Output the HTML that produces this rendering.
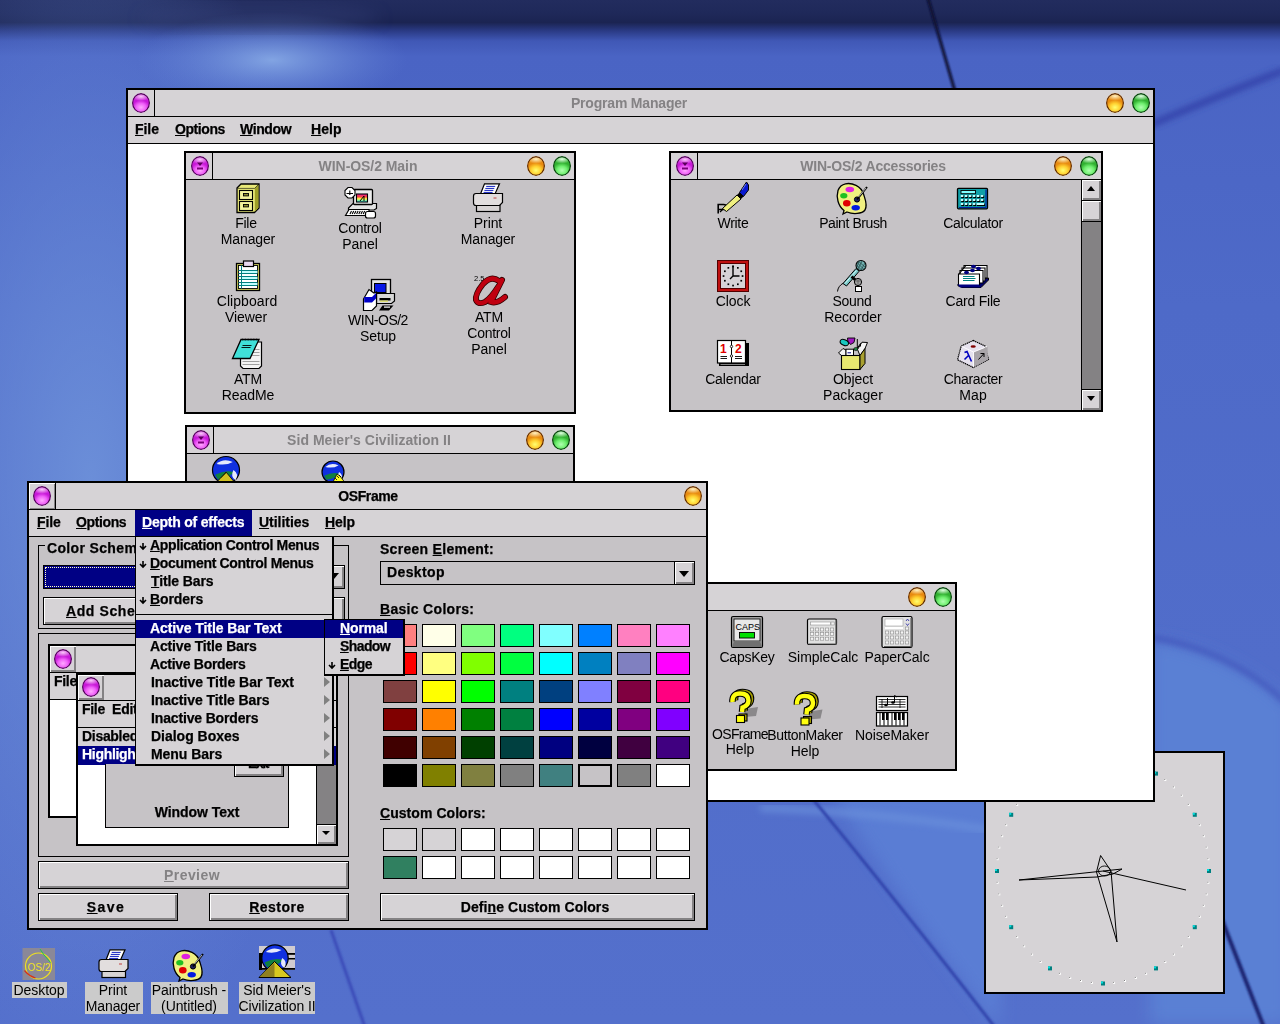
<!DOCTYPE html><html><head><meta charset="utf-8"><style>
*{margin:0;padding:0;box-sizing:border-box}
html,body{width:1280px;height:1024px;overflow:hidden;background:#4f68c8;font-family:'Liberation Sans', sans-serif}
div,svg{position:absolute}
.abs{position:absolute}
.t{-webkit-font-smoothing:antialiased;will-change:transform;position:absolute;white-space:nowrap;line-height:15px;font-size:13px;font-family:'Liberation Sans', sans-serif}
.ball{border-radius:50%}
.purple{background:radial-gradient(ellipse 60% 45% at 50% 72%, #ffa8ff 0%, #f060f8 45%, rgba(230,40,240,0) 80%), radial-gradient(ellipse 50% 22% at 50% 18%, #f8c8f8 0%, rgba(240,160,240,0) 100%), #c818d8;box-shadow:inset 0 0 0 1.2px #4a0a50}
.orange{background:radial-gradient(ellipse 60% 45% at 50% 72%, #ffff70 0%, #ffd030 45%, rgba(240,150,0,0) 85%), radial-gradient(ellipse 50% 22% at 50% 16%, #fff0c0 0%, rgba(255,220,150,0) 100%), #e88a10;box-shadow:inset 0 0 0 1.2px #5a2a08}
.green{background:radial-gradient(ellipse 60% 45% at 50% 72%, #b0ffb0 0%, #70f070 45%, rgba(60,200,60,0) 85%), radial-gradient(ellipse 50% 22% at 50% 16%, #e0ffe0 0%, rgba(200,255,200,0) 100%), #30b030;box-shadow:inset 0 0 0 1.2px #0a3a10}
.btn{background:#d6d3d6;border:1px solid #000;box-shadow:inset 2px 2px 0 #fff, inset -2px -2px 0 #848284}
</style></head><body><svg style="left:0;top:0" width="1280" height="1024" viewBox="0 0 1280 1024">
<defs>
<linearGradient id="bgv" x1="0" y1="0" x2="0" y2="1" >
<stop offset="0" stop-color="#222c5e"/><stop offset="0.012" stop-color="#1f295a"/>
<stop offset="0.022" stop-color="#1b2452"/><stop offset="0.03" stop-color="#2a3a84"/>
<stop offset="0.04" stop-color="#4058b6"/><stop offset="0.055" stop-color="#4a64c4"/>
<stop offset="0.3" stop-color="#4e6ac8"/><stop offset="1" stop-color="#5470cc"/>
</linearGradient>
<radialGradient id="blob" cx="0.5" cy="0.5" r="0.5">
<stop offset="0" stop-color="#90b4ea" stop-opacity="0.8"/><stop offset="1" stop-color="#6a8ad8" stop-opacity="0"/>
</radialGradient>
<radialGradient id="lglow" cx="0.5" cy="0.5" r="0.5">
<stop offset="0" stop-color="#6e92da" stop-opacity="0.9"/><stop offset="1" stop-color="#6a8ad8" stop-opacity="0"/>
</radialGradient>
<filter id="bl3"><feGaussianBlur stdDeviation="3"/></filter>
<filter id="bl1"><feGaussianBlur stdDeviation="1.2"/></filter>
<filter id="bl8"><feGaussianBlur stdDeviation="8"/></filter>
</defs>
<rect width="1280" height="1024" fill="url(#bgv)"/>
<ellipse cx="90" cy="480" rx="250" ry="600" fill="url(#lglow)"/>
<ellipse cx="272" cy="60" rx="135" ry="48" fill="url(#blob)"/>
<ellipse cx="260" cy="18" rx="120" ry="14" fill="#3a4680" opacity="0.35" filter="url(#bl8)"/>
<path d="M927 -5 L956 95" stroke="#0a1030" stroke-width="3" filter="url(#bl1)"/>
<path d="M1150 125 Q1220 95 1285 70" stroke="#3040a8" stroke-width="6" fill="none" filter="url(#bl3)"/>
<path d="M1150 640 Q1230 650 1290 705 L1290 1024 L1150 1024 Z" fill="#5a80d4" filter="url(#bl8)"/>
<path d="M1150 637 Q1230 650 1285 702" stroke="#3e50b8" stroke-width="4" fill="none" filter="url(#bl3)"/>
<path d="M830 790 L1000 790 L1000 1030 L1000 1030 Q900 900 830 790Z" fill="#5b80d6" opacity="0.85" filter="url(#bl8)"/>
<path d="M760 808 Q880 812 990 830" stroke="#6a90dc" stroke-width="8" fill="none" opacity="0.7" filter="url(#bl3)"/>
<path d="M812 798 Q900 905 997 1030" stroke="#3244ac" stroke-width="3" fill="none" filter="url(#bl1)"/>

<path d="M331 930 L366 1030" stroke="#3a4cb8" stroke-width="3" fill="none" filter="url(#bl1)"/>
<path d="M1222 920 L1265 1030" stroke="#1a2470" stroke-width="4" fill="none" filter="url(#bl1)"/>
</svg>
<div class="" style="left:984px;top:751px;width:241px;height:243px;background:#000"></div>
<div class="" style="left:986px;top:753px;width:237px;height:239px;background:#d6d3d6"></div>
<svg style="left:0;top:0" width="1280" height="1024"><rect x="1101.0" y="756.5" width="4" height="4" fill="#008080"/><rect x="1101.0" y="756.5" width="2" height="2" fill="#00e0e0"/><rect x="1113.1" y="758.1" width="2" height="2" fill="#fff"/><rect x="1113.1" y="758.1" width="1" height="1" fill="#808080"/><rect x="1124.0" y="760.0" width="2" height="2" fill="#fff"/><rect x="1124.0" y="760.0" width="1" height="1" fill="#808080"/><rect x="1134.8" y="763.0" width="2" height="2" fill="#fff"/><rect x="1134.8" y="763.0" width="1" height="1" fill="#808080"/><rect x="1145.1" y="767.2" width="2" height="2" fill="#fff"/><rect x="1145.1" y="767.2" width="1" height="1" fill="#808080"/><rect x="1154.0" y="771.6" width="4" height="4" fill="#008080"/><rect x="1154.0" y="771.6" width="2" height="2" fill="#00e0e0"/><rect x="1164.3" y="779.0" width="2" height="2" fill="#fff"/><rect x="1164.3" y="779.0" width="1" height="1" fill="#808080"/><rect x="1172.9" y="786.4" width="2" height="2" fill="#fff"/><rect x="1172.9" y="786.4" width="1" height="1" fill="#808080"/><rect x="1180.8" y="794.7" width="2" height="2" fill="#fff"/><rect x="1180.8" y="794.7" width="1" height="1" fill="#808080"/><rect x="1187.8" y="803.9" width="2" height="2" fill="#fff"/><rect x="1187.8" y="803.9" width="1" height="1" fill="#808080"/><rect x="1192.8" y="812.8" width="4" height="4" fill="#008080"/><rect x="1192.8" y="812.8" width="2" height="2" fill="#00e0e0"/><rect x="1198.8" y="824.2" width="2" height="2" fill="#fff"/><rect x="1198.8" y="824.2" width="1" height="1" fill="#808080"/><rect x="1202.8" y="835.2" width="2" height="2" fill="#fff"/><rect x="1202.8" y="835.2" width="1" height="1" fill="#808080"/><rect x="1205.7" y="846.6" width="2" height="2" fill="#fff"/><rect x="1205.7" y="846.6" width="1" height="1" fill="#808080"/><rect x="1207.4" y="858.2" width="2" height="2" fill="#fff"/><rect x="1207.4" y="858.2" width="1" height="1" fill="#808080"/><rect x="1207.0" y="869.0" width="4" height="4" fill="#008080"/><rect x="1207.0" y="869.0" width="2" height="2" fill="#00e0e0"/><rect x="1207.4" y="881.8" width="2" height="2" fill="#fff"/><rect x="1207.4" y="881.8" width="1" height="1" fill="#808080"/><rect x="1205.7" y="893.4" width="2" height="2" fill="#fff"/><rect x="1205.7" y="893.4" width="1" height="1" fill="#808080"/><rect x="1202.8" y="904.8" width="2" height="2" fill="#fff"/><rect x="1202.8" y="904.8" width="1" height="1" fill="#808080"/><rect x="1198.8" y="915.8" width="2" height="2" fill="#fff"/><rect x="1198.8" y="915.8" width="1" height="1" fill="#808080"/><rect x="1192.8" y="925.2" width="4" height="4" fill="#008080"/><rect x="1192.8" y="925.2" width="2" height="2" fill="#00e0e0"/><rect x="1187.8" y="936.1" width="2" height="2" fill="#fff"/><rect x="1187.8" y="936.1" width="1" height="1" fill="#808080"/><rect x="1180.8" y="945.3" width="2" height="2" fill="#fff"/><rect x="1180.8" y="945.3" width="1" height="1" fill="#808080"/><rect x="1172.9" y="953.6" width="2" height="2" fill="#fff"/><rect x="1172.9" y="953.6" width="1" height="1" fill="#808080"/><rect x="1164.3" y="961.0" width="2" height="2" fill="#fff"/><rect x="1164.3" y="961.0" width="1" height="1" fill="#808080"/><rect x="1154.0" y="966.4" width="4" height="4" fill="#008080"/><rect x="1154.0" y="966.4" width="2" height="2" fill="#00e0e0"/><rect x="1145.1" y="972.8" width="2" height="2" fill="#fff"/><rect x="1145.1" y="972.8" width="1" height="1" fill="#808080"/><rect x="1134.8" y="977.0" width="2" height="2" fill="#fff"/><rect x="1134.8" y="977.0" width="1" height="1" fill="#808080"/><rect x="1124.0" y="980.0" width="2" height="2" fill="#fff"/><rect x="1124.0" y="980.0" width="1" height="1" fill="#808080"/><rect x="1113.1" y="981.9" width="2" height="2" fill="#fff"/><rect x="1113.1" y="981.9" width="1" height="1" fill="#808080"/><rect x="1101.0" y="981.5" width="4" height="4" fill="#008080"/><rect x="1101.0" y="981.5" width="2" height="2" fill="#00e0e0"/><rect x="1090.9" y="981.9" width="2" height="2" fill="#fff"/><rect x="1090.9" y="981.9" width="1" height="1" fill="#808080"/><rect x="1080.0" y="980.0" width="2" height="2" fill="#fff"/><rect x="1080.0" y="980.0" width="1" height="1" fill="#808080"/><rect x="1069.2" y="977.0" width="2" height="2" fill="#fff"/><rect x="1069.2" y="977.0" width="1" height="1" fill="#808080"/><rect x="1058.9" y="972.8" width="2" height="2" fill="#fff"/><rect x="1058.9" y="972.8" width="1" height="1" fill="#808080"/><rect x="1048.0" y="966.4" width="4" height="4" fill="#008080"/><rect x="1048.0" y="966.4" width="2" height="2" fill="#00e0e0"/><rect x="1039.7" y="961.0" width="2" height="2" fill="#fff"/><rect x="1039.7" y="961.0" width="1" height="1" fill="#808080"/><rect x="1031.1" y="953.6" width="2" height="2" fill="#fff"/><rect x="1031.1" y="953.6" width="1" height="1" fill="#808080"/><rect x="1023.2" y="945.3" width="2" height="2" fill="#fff"/><rect x="1023.2" y="945.3" width="1" height="1" fill="#808080"/><rect x="1016.2" y="936.1" width="2" height="2" fill="#fff"/><rect x="1016.2" y="936.1" width="1" height="1" fill="#808080"/><rect x="1009.2" y="925.2" width="4" height="4" fill="#008080"/><rect x="1009.2" y="925.2" width="2" height="2" fill="#00e0e0"/><rect x="1005.2" y="915.8" width="2" height="2" fill="#fff"/><rect x="1005.2" y="915.8" width="1" height="1" fill="#808080"/><rect x="1001.2" y="904.8" width="2" height="2" fill="#fff"/><rect x="1001.2" y="904.8" width="1" height="1" fill="#808080"/><rect x="998.3" y="893.4" width="2" height="2" fill="#fff"/><rect x="998.3" y="893.4" width="1" height="1" fill="#808080"/><rect x="996.6" y="881.8" width="2" height="2" fill="#fff"/><rect x="996.6" y="881.8" width="1" height="1" fill="#808080"/><rect x="995.0" y="869.0" width="4" height="4" fill="#008080"/><rect x="995.0" y="869.0" width="2" height="2" fill="#00e0e0"/><rect x="996.6" y="858.2" width="2" height="2" fill="#fff"/><rect x="996.6" y="858.2" width="1" height="1" fill="#808080"/><rect x="998.3" y="846.6" width="2" height="2" fill="#fff"/><rect x="998.3" y="846.6" width="1" height="1" fill="#808080"/><rect x="1001.2" y="835.2" width="2" height="2" fill="#fff"/><rect x="1001.2" y="835.2" width="1" height="1" fill="#808080"/><rect x="1005.2" y="824.2" width="2" height="2" fill="#fff"/><rect x="1005.2" y="824.2" width="1" height="1" fill="#808080"/><rect x="1009.2" y="812.8" width="4" height="4" fill="#008080"/><rect x="1009.2" y="812.8" width="2" height="2" fill="#00e0e0"/><rect x="1016.2" y="803.9" width="2" height="2" fill="#fff"/><rect x="1016.2" y="803.9" width="1" height="1" fill="#808080"/><rect x="1023.2" y="794.7" width="2" height="2" fill="#fff"/><rect x="1023.2" y="794.7" width="1" height="1" fill="#808080"/><rect x="1031.1" y="786.4" width="2" height="2" fill="#fff"/><rect x="1031.1" y="786.4" width="1" height="1" fill="#808080"/><rect x="1039.7" y="779.0" width="2" height="2" fill="#fff"/><rect x="1039.7" y="779.0" width="1" height="1" fill="#808080"/><rect x="1048.0" y="771.6" width="4" height="4" fill="#008080"/><rect x="1048.0" y="771.6" width="2" height="2" fill="#00e0e0"/><rect x="1058.9" y="767.2" width="2" height="2" fill="#fff"/><rect x="1058.9" y="767.2" width="1" height="1" fill="#808080"/><rect x="1069.2" y="763.0" width="2" height="2" fill="#fff"/><rect x="1069.2" y="763.0" width="1" height="1" fill="#808080"/><rect x="1080.0" y="760.0" width="2" height="2" fill="#fff"/><rect x="1080.0" y="760.0" width="1" height="1" fill="#808080"/><rect x="1090.9" y="758.1" width="2" height="2" fill="#fff"/><rect x="1090.9" y="758.1" width="1" height="1" fill="#808080"/><polygon points="1019,880 1122,869 1113,874 1097,877" fill="none" stroke="#000" stroke-width="1"/><polygon points="1100.6,855.5 1096.5,872 1117,942 1111,871" fill="none" stroke="#000" stroke-width="1"/><ellipse cx="1104.5" cy="871" rx="6" ry="5" fill="none" stroke="#000" stroke-width="0.9"/><line x1="1103" y1="871" x2="1186" y2="890" stroke="#000" stroke-width="1"/></svg>
<div class="" style="left:126px;top:88px;width:1029px;height:714px;background:#000"></div>
<div class="" style="left:128px;top:90px;width:1025px;height:26px;background:#d6d3d6"></div>
<div class="" style="left:154px;top:90px;width:1px;height:26px;background:#000"></div>
<div class="" style="left:128px;top:116px;width:1025px;height:1px;background:#000"></div>
<div class="" style="left:128px;top:117px;width:1025px;height:26px;background:#d6d3d6"></div>
<div class="" style="left:128px;top:143px;width:1025px;height:1px;background:#000"></div>
<div class="" style="left:128px;top:144px;width:1025px;height:656px;background:#fff"></div>
<div class="ball purple" style="left:131.5px;top:93.0px;width:18px;height:20px"></div>
<div class="t" style="left:479.11px;width:300px;text-align:center;top:96px;font-weight:bold;color:#848284;font-size:14px;letter-spacing:-0.186px;">Program Manager</div>
<div class="ball orange" style="left:1106.0px;top:93.0px;width:18px;height:20px"></div>
<div class="ball green" style="left:1132.0px;top:93.0px;width:18px;height:20px"></div>
<div class="t" style="left:135.40px;top:122px;font-weight:bold;color:#000;font-size:14px;letter-spacing:-0.067px;-webkit-text-stroke:0.25px #000;"><u>F</u>ile</div>
<div class="t" style="left:175.40px;top:122px;font-weight:bold;color:#000;font-size:14px;letter-spacing:-0.417px;-webkit-text-stroke:0.25px #000;"><u>O</u>ptions</div>
<div class="t" style="left:240.00px;top:122px;font-weight:bold;color:#000;font-size:14px;letter-spacing:-0.400px;-webkit-text-stroke:0.25px #000;"><u>W</u>indow</div>
<div class="t" style="left:311.00px;top:122px;font-weight:bold;color:#000;font-size:14px;letter-spacing:0.083px;-webkit-text-stroke:0.25px #000;"><u>H</u>elp</div>
<div class="" style="left:184px;top:151px;width:392px;height:263px;background:#000"></div>
<div class="" style="left:186px;top:153px;width:388px;height:26px;background:#d6d3d6"></div>
<div class="" style="left:212px;top:153px;width:1px;height:26px;background:#000"></div>
<div class="" style="left:186px;top:179px;width:388px;height:1px;background:#000"></div>
<div class="" style="left:186px;top:180px;width:388px;height:232px;background:#c6c3c6"></div>
<div class="ball purple" style="left:190.5px;top:156.0px;width:18px;height:20px"></div>
<svg class="abs" style="left:195.5px;top:162px" width="8" height="10"><path d="M1 0.5 L7 0.5 L4 4 Z" fill="#5a005a"/><rect x="1" y="5.5" width="6" height="2" fill="#7a007a"/></svg>
<div class="t" style="left:217.97px;width:300px;text-align:center;top:159px;font-weight:bold;color:#848284;font-size:14px;letter-spacing:-0.058px;">WIN-OS/2 Main</div>
<div class="ball orange" style="left:527.0px;top:156.0px;width:18px;height:20px"></div>
<div class="ball green" style="left:553.0px;top:156.0px;width:18px;height:20px"></div>
<svg style="left:230px;top:180px" width="36" height="36" viewBox="230 180 36 36">
<polygon points="237,188 241,184 259,184 259,208 254.5,212.5 237,212.5" fill="#e8e878" stroke="#000" stroke-width="1.3"/>
<polygon points="254.8,188.6 258.4,184.8 258.4,207.8 254.8,211.8" fill="#a0a028"/>
<path d="M237.6 188.4H254.6L258.6 184.4" stroke="#000" stroke-width="0.6" fill="none"/>
<rect x="239.5" y="190.5" width="13" height="9" fill="#f4f49c" stroke="#000" stroke-width="1.1"/>
<rect x="239.5" y="201.5" width="13" height="9" fill="#f4f49c" stroke="#000" stroke-width="1.1"/>
<rect x="243.5" y="193.5" width="5" height="2.4" fill="#909030" stroke="#000" stroke-width="0.9"/>
<rect x="243.5" y="204.5" width="5" height="2.4" fill="#909030" stroke="#000" stroke-width="0.9"/></svg>
<div class="t" style="left:95.88px;width:300px;text-align:center;top:216px;font-weight:normal;color:#000;font-size:14px;letter-spacing:-0.233px;">File</div>
<div class="t" style="left:98.33px;width:300px;text-align:center;top:232px;font-weight:normal;color:#000;font-size:14px;letter-spacing:-0.133px;">Manager</div>
<svg style="left:342px;top:184px" width="38" height="38" viewBox="342 184 38 38">
<defs><linearGradient id="rb" x1="0" y1="0" x2="0" y2="1"><stop offset="0" stop-color="#e020a0"/><stop offset="0.35" stop-color="#ff4040"/><stop offset="0.6" stop-color="#ffff40"/><stop offset="1" stop-color="#20e0ff"/></linearGradient></defs>
<polygon points="348.5,208 353,203.5 376.5,203.5 376.5,208.5 374,210 348.5,210" fill="#e4e4e4" stroke="#000" stroke-width="1.2"/>
<polygon points="345.5,215.5 349,209.5 369,209.5 369,215.5" fill="#fff" stroke="#000" stroke-width="1.2"/>
<path d="M351.5 211L350.0 214M353.7 211L352.2 214M355.9 211L354.4 214M358.1 211L356.6 214M360.3 211L358.8 214M362.5 211L361.0 214M364.7 211L363.2 214" stroke="#000" stroke-width="1.1"/>
<rect x="365.5" y="211.5" width="10" height="6.5" rx="2" fill="#fff" stroke="#000" stroke-width="1.2"/>
<rect x="353.5" y="189.5" width="19" height="15" rx="1" fill="#ececec" stroke="#000" stroke-width="1.3"/>
<rect x="356.5" y="194" width="11" height="8" fill="url(#rb)" stroke="#000" stroke-width="1.1"/>
<path d="M360 201L364 196V201" stroke="#000" stroke-width="1" fill="none"/>
<polygon points="348,187.5 352,187.5 355,190.5 355,195 352,198 348,198 345,195 345,190.5" fill="#fff" stroke="#000" stroke-width="1.1"/>
<path d="M346.5 193.5H353M349.8 190.5V195" stroke="#000" stroke-width="1.1"/></svg>
<div class="t" style="left:209.88px;width:300px;text-align:center;top:221px;font-weight:normal;color:#000;font-size:14px;letter-spacing:-0.250px;">Control</div>
<div class="t" style="left:209.95px;width:300px;text-align:center;top:237px;font-weight:normal;color:#000;font-size:14px;letter-spacing:-0.100px;">Panel</div>
<svg style="left:468px;top:178px" width="40" height="40" viewBox="468 178 40 40"><g transform="translate(0 0)">
<polygon points="484.5,183.8 499.5,183.8 495,194 480.5,194" fill="#fff" stroke="#000" stroke-width="1.2"/>
<path d="M486.2 186.4h9 M485.3 188.4h9 M484.4 190.4h9 M483.6 192.4h9" stroke="#1020c0" stroke-width="1"/>
<rect x="476.5" y="205" width="23.5" height="6.5" fill="#d8d4d4" stroke="#000" stroke-width="1.2"/>
<path d="M476 193.5H502.5V202.5L499.5 205.5H476Q473.5 205.5 473.5 203V196Q473.5 193.5 476 193.5Z" fill="#e2dede" stroke="#000" stroke-width="1.2"/>
<path d="M493.5 198h3" stroke="#c04040" stroke-width="1"/></g></svg>
<div class="t" style="left:337.95px;width:300px;text-align:center;top:216px;font-weight:normal;color:#000;font-size:14px;letter-spacing:-0.100px;">Print</div>
<div class="t" style="left:337.93px;width:300px;text-align:center;top:232px;font-weight:normal;color:#000;font-size:14px;letter-spacing:-0.133px;">Manager</div>
<svg style="left:230px;top:256px" width="36" height="40" viewBox="230 256 36 40">
<rect x="236.5" y="263.5" width="23" height="27" fill="#d8d860" stroke="#000" stroke-width="1.3"/>
<rect x="238.5" y="265.5" width="19" height="23" fill="#fff" stroke="#000" stroke-width="0.9"/>
<rect x="242" y="271" width="15.5" height="2" fill="#c0ffff"/><rect x="242" y="277" width="15.5" height="2" fill="#c0ffff"/><rect x="242" y="283" width="15.5" height="2" fill="#c0ffff"/><path d="M238.5 270.5H257.5" stroke="#008080" stroke-width="1"/><path d="M238.5 273.5H257.5" stroke="#008080" stroke-width="1"/><path d="M238.5 276.5H257.5" stroke="#008080" stroke-width="1"/><path d="M238.5 279.5H257.5" stroke="#008080" stroke-width="1"/><path d="M238.5 282.5H257.5" stroke="#008080" stroke-width="1"/><path d="M238.5 285.5H257.5" stroke="#008080" stroke-width="1"/>
<path d="M241.5 265.5V288.5" stroke="#008080" stroke-width="1"/>
<rect x="243.5" y="261" width="10" height="5.5" fill="#e8d8f0" stroke="#000" stroke-width="1.2"/></svg>
<div class="t" style="left:96.53px;width:300px;text-align:center;top:294px;font-weight:normal;color:#000;font-size:14px;letter-spacing:0.062px;">Clipboard</div>
<div class="t" style="left:96.45px;width:300px;text-align:center;top:310px;font-weight:normal;color:#000;font-size:14px;letter-spacing:-0.100px;">Viewer</div>
<svg style="left:358px;top:274px" width="42" height="42" viewBox="358 274 42 42">
<rect x="371.5" y="279.5" width="19" height="16" fill="#e4e4e4" stroke="#000" stroke-width="1.3"/>
<rect x="374.5" y="283.5" width="11.5" height="9" fill="#0818e8" stroke="#000" stroke-width="1"/>
<polygon points="376.5,293.5 394.5,293.5 394.5,301 391.5,303.5 376.5,303.5" fill="#d8d8d8" stroke="#000" stroke-width="1.2"/>
<rect x="379.5" y="298" width="11" height="2.5" fill="#000"/>
<rect x="380" y="300.5" width="8" height="1.3" fill="#e0e060"/>
<polygon points="382.5,305.5 393.5,305.5 389,310.5 379,310.5" fill="#000"/>
<rect x="384" y="306.5" width="6" height="1.2" fill="#fff"/>
<polygon points="363.5,299 369,289.5 374,293 376.5,292 376.5,306 372,310.5 363.5,310.5" fill="#fff" stroke="#000" stroke-width="1.2"/>
<polygon points="364.2,297 372,297 376,293 376,298.5 372,302.5 364.2,302.5" fill="#0000c8"/></svg>
<div class="t" style="left:227.75px;width:300px;text-align:center;top:313px;font-weight:normal;color:#000;font-size:14px;letter-spacing:-0.500px;">WIN-OS/2</div>
<div class="t" style="left:227.95px;width:300px;text-align:center;top:329px;font-weight:normal;color:#000;font-size:14px;letter-spacing:-0.100px;">Setup</div>
<svg style="left:466px;top:270px" width="44" height="40" viewBox="466 270 44 40">
<text x="474" y="281" font-family="Liberation Sans" font-size="7.5" fill="#000">2.5</text>
<path d="M499 281Q491 275 483 284Q475 294 476 300Q478 305 485 302Q491 298 498 287" stroke="#300000" stroke-width="6" fill="none" stroke-linecap="round"/>
<path d="M502 280L491 302Q497 304 505 297" stroke="#300000" stroke-width="6" fill="none" stroke-linecap="round"/>
<path d="M499 281Q491 275 483 284Q475 294 476 300Q478 305 485 302Q491 298 498 287" stroke="#c00010" stroke-width="4.4" fill="none" stroke-linecap="round"/>
<path d="M502 280L491 302Q497 304 505 297" stroke="#c00010" stroke-width="4.4" fill="none" stroke-linecap="round"/></svg>
<div class="t" style="left:338.95px;width:300px;text-align:center;top:310px;font-weight:normal;color:#000;font-size:14px;letter-spacing:-0.100px;">ATM</div>
<div class="t" style="left:338.88px;width:300px;text-align:center;top:326px;font-weight:normal;color:#000;font-size:14px;letter-spacing:-0.250px;">Control</div>
<div class="t" style="left:338.95px;width:300px;text-align:center;top:342px;font-weight:normal;color:#000;font-size:14px;letter-spacing:-0.100px;">Panel</div>
<svg style="left:226px;top:334px" width="40" height="40" viewBox="226 334 40 40">
<path d="M240.5 342H261.5V366L259 368.5H243L240.5 366Z" fill="#f4f4f4" stroke="#000" stroke-width="1.2"/>
<path d="M252 349.5H259.5" stroke="#a0a0a0" stroke-width="1"/><path d="M252 352.5H259.5" stroke="#a0a0a0" stroke-width="1"/><path d="M252 355.5H259.5" stroke="#a0a0a0" stroke-width="1"/><path d="M242.5 361.5H259.5" stroke="#a0a0a0" stroke-width="1"/><path d="M242.5 364.5H259.5" stroke="#a0a0a0" stroke-width="1"/>
<polygon points="241,339.5 259,339.5 250,358.5 232.5,358.5" fill="#40e0d8" stroke="#000" stroke-width="1.3"/>
<path d="M242 339.5H258" stroke="#000" stroke-width="1.6" stroke-dasharray="1.2 1.6"/>
<path d="M242.5 345.5H251.5M241.5 347.5H250.5" stroke="#000" stroke-width="0.9"/></svg>
<div class="t" style="left:97.95px;width:300px;text-align:center;top:372px;font-weight:normal;color:#000;font-size:14px;letter-spacing:-0.100px;">ATM</div>
<div class="t" style="left:97.95px;width:300px;text-align:center;top:388px;font-weight:normal;color:#000;font-size:14px;letter-spacing:-0.100px;">ReadMe</div>
<div class="" style="left:669px;top:151px;width:434px;height:261px;background:#000"></div>
<div class="" style="left:671px;top:153px;width:430px;height:26px;background:#d6d3d6"></div>
<div class="" style="left:697px;top:153px;width:1px;height:26px;background:#000"></div>
<div class="" style="left:671px;top:179px;width:430px;height:1px;background:#000"></div>
<div class="" style="left:671px;top:180px;width:430px;height:230px;background:#c6c3c6"></div>
<div class="ball purple" style="left:675.5px;top:156.0px;width:18px;height:20px"></div>
<svg class="abs" style="left:680.5px;top:162px" width="8" height="10"><path d="M1 0.5 L7 0.5 L4 4 Z" fill="#5a005a"/><rect x="1" y="5.5" width="6" height="2" fill="#7a007a"/></svg>
<div class="t" style="left:723.39px;width:300px;text-align:center;top:159px;font-weight:bold;color:#848284;font-size:14px;letter-spacing:-0.211px;">WIN-OS/2 Accessories</div>
<div class="ball orange" style="left:1054.0px;top:156.0px;width:18px;height:20px"></div>
<div class="ball green" style="left:1080.0px;top:156.0px;width:18px;height:20px"></div>
<svg style="left:712px;top:178px" width="40" height="40" viewBox="712 178 40 40">
<path d="M718.2 213.5V204.5H723.5Q726.5 204.5 726.5 207Q726.5 209.5 723.5 209.5H718.2" stroke="#000" stroke-width="1.6" fill="none"/>
<path d="M720 212L724 208" stroke="#000" stroke-width="1.2"/>
<polygon points="722.5,208.5 737,195 741,199 726.5,211.5" fill="#f0f080" stroke="#000" stroke-width="1"/>
<polygon points="737,195 739.5,192.5 743.5,196.5 741,199" fill="#000"/>
<polygon points="739.5,192.5 746.5,182 748.5,185 748.5,190 743.5,196.5" fill="#0818d0" stroke="#000" stroke-width="1"/>
<path d="M742 190L746 184" stroke="#8090ff" stroke-width="0.8"/></svg>
<div class="t" style="left:583.34px;width:300px;text-align:center;top:216px;font-weight:normal;color:#000;font-size:14px;letter-spacing:-0.312px;">Write</div>
<svg style="left:832px;top:178px" width="40" height="40" viewBox="832 178 40 40"><g transform="translate(0 0)">
<path d="M845.5 183.8C852 182.5 861 186 863.5 194C865 199 868 205 865 210C862 214 853 214.5 847 212L843 214L844 210.5C838 206 836 197 838 190.5C839.5 186.5 842 184.5 845.5 183.8Z" fill="#f0f080" stroke="#000" stroke-width="1.3"/>
<ellipse cx="849.8" cy="189.5" rx="4.3" ry="2.7" fill="#e020e0"/>
<ellipse cx="843.8" cy="195.8" rx="3.6" ry="2.7" fill="#20c020"/>
<ellipse cx="846.8" cy="203.3" rx="3.8" ry="3.2" fill="#e00000"/>
<ellipse cx="855.7" cy="207.7" rx="4.2" ry="2.7" fill="#0018e0"/>
<circle cx="857" cy="199.5" r="2.6" fill="#202060" stroke="#000" stroke-width="1"/>
<path d="M857 199.5L867 187" stroke="#000" stroke-width="2"/>
<path d="M858.5 197L866 188" stroke="#fff" stroke-width="0.7"/></g></svg>
<div class="t" style="left:703.29px;width:300px;text-align:center;top:216px;font-weight:normal;color:#000;font-size:14px;letter-spacing:-0.425px;">Paint Brush</div>
<svg style="left:952px;top:180px" width="40" height="40" viewBox="952 180 40 40">
<rect x="957.5" y="188.3" width="30" height="20.5" rx="1" fill="#10a0a8" stroke="#000" stroke-width="1.3"/>
<path d="M986 189.5V207.5H959" stroke="#0020a0" stroke-width="1.2" fill="none"/>
<rect x="961" y="190.5" width="14.5" height="3.2" fill="#80ffff" stroke="#000" stroke-width="0.9"/>
<rect x="961.2" y="195.5" width="3" height="2.6" fill="#000"/><rect x="960.8" y="195" width="2.5" height="2" fill="#c0ffff"/><rect x="965.2" y="195.5" width="3" height="2.6" fill="#000"/><rect x="964.8" y="195" width="2.5" height="2" fill="#c0ffff"/><rect x="969.2" y="195.5" width="3" height="2.6" fill="#000"/><rect x="968.8" y="195" width="2.5" height="2" fill="#c0ffff"/><rect x="973.2" y="195.5" width="3" height="2.6" fill="#000"/><rect x="972.8" y="195" width="2.5" height="2" fill="#c0ffff"/><rect x="977.2" y="195.5" width="3" height="2.6" fill="#000"/><rect x="976.8" y="195" width="2.5" height="2" fill="#c0ffff"/><rect x="981.2" y="195.5" width="3" height="2.6" fill="#000"/><rect x="980.8" y="195" width="2.5" height="2" fill="#c0ffff"/><rect x="961.2" y="199.5" width="3" height="2.6" fill="#000"/><rect x="960.8" y="199" width="2.5" height="2" fill="#c0ffff"/><rect x="965.2" y="199.5" width="3" height="2.6" fill="#000"/><rect x="964.8" y="199" width="2.5" height="2" fill="#c0ffff"/><rect x="969.2" y="199.5" width="3" height="2.6" fill="#000"/><rect x="968.8" y="199" width="2.5" height="2" fill="#c0ffff"/><rect x="973.2" y="199.5" width="3" height="2.6" fill="#000"/><rect x="972.8" y="199" width="2.5" height="2" fill="#c0ffff"/><rect x="977.2" y="199.5" width="3" height="2.6" fill="#000"/><rect x="976.8" y="199" width="2.5" height="2" fill="#c0ffff"/><rect x="981.2" y="199.5" width="3" height="2.6" fill="#000"/><rect x="980.8" y="199" width="2.5" height="2" fill="#c0ffff"/><rect x="961.2" y="203.5" width="3" height="2.6" fill="#000"/><rect x="960.8" y="203" width="2.5" height="2" fill="#c0ffff"/><rect x="965.2" y="203.5" width="3" height="2.6" fill="#000"/><rect x="964.8" y="203" width="2.5" height="2" fill="#c0ffff"/><rect x="969.2" y="203.5" width="3" height="2.6" fill="#000"/><rect x="968.8" y="203" width="2.5" height="2" fill="#c0ffff"/><rect x="973.2" y="203.5" width="3" height="2.6" fill="#000"/><rect x="972.8" y="203" width="2.5" height="2" fill="#c0ffff"/><rect x="977" y="203.5" width="8" height="2.6" fill="#000"/><rect x="976.6" y="203" width="7.6" height="2" fill="#c0ffff"/></svg>
<div class="t" style="left:822.82px;width:300px;text-align:center;top:216px;font-weight:normal;color:#000;font-size:14px;letter-spacing:-0.361px;">Calculator</div>
<svg style="left:712px;top:256px" width="40" height="40" viewBox="712 256 40 40">
<rect x="717.5" y="260.5" width="31" height="31" fill="#c01010" stroke="#500000" stroke-width="1"/>
<rect x="720.5" y="263.5" width="25" height="25" fill="#d6d3d6" stroke="#500000" stroke-width="1"/>
<rect x="732.2" y="265.7" width="1.7" height="1.7" fill="#000"/><rect x="737.0" y="267.0" width="1.7" height="1.7" fill="#000"/><rect x="740.4" y="270.4" width="1.7" height="1.7" fill="#000"/><rect x="741.7" y="275.2" width="1.7" height="1.7" fill="#000"/><rect x="740.4" y="279.9" width="1.7" height="1.7" fill="#000"/><rect x="737.0" y="283.4" width="1.7" height="1.7" fill="#000"/><rect x="732.2" y="284.7" width="1.7" height="1.7" fill="#000"/><rect x="727.5" y="283.4" width="1.7" height="1.7" fill="#000"/><rect x="724.0" y="279.9" width="1.7" height="1.7" fill="#000"/><rect x="722.7" y="275.2" width="1.7" height="1.7" fill="#000"/><rect x="724.0" y="270.4" width="1.7" height="1.7" fill="#000"/><rect x="727.5" y="267.0" width="1.7" height="1.7" fill="#000"/>
<path d="M733 276V265.5M733 276H739.5M733 276L730 279" stroke="#000" stroke-width="1.4"/></svg>
<div class="t" style="left:582.97px;width:300px;text-align:center;top:294px;font-weight:normal;color:#000;font-size:14px;letter-spacing:-0.062px;">Clock</div>
<svg style="left:832px;top:256px" width="40" height="40" viewBox="832 256 40 40">
<path d="M837.5 291.5Q838 286 843.5 283" stroke="#000" stroke-width="1" fill="none"/>
<polygon points="843,283.5 856,268.5 859.2,271.2 846.5,286" fill="#78c8c8" stroke="#000" stroke-width="1"/>
<path d="M845 283.5L856.5 270.5" stroke="#e0ffff" stroke-width="0.9"/>
<circle cx="861" cy="265.5" r="5" fill="#70b0b0" stroke="#000" stroke-width="1.1"/>
<path d="M857 262.5L864 269.5M858 260.8L866 268M856.5 265L862 270.5M859 261L857 267M862 261L858 269M865 263L861 270" stroke="#204040" stroke-width="0.7"/>
<path d="M851.5 276.5L856 280.5" stroke="#000" stroke-width="3"/>
<circle cx="858" cy="282" r="3.6" fill="#a0a0a0" stroke="#000" stroke-width="1"/>
<path d="M855.5 281h5M858 279.5v5" stroke="#505050" stroke-width="0.7"/>
<rect x="855.5" y="286.5" width="6" height="5" fill="#fff" stroke="#000" stroke-width="1"/></svg>
<div class="t" style="left:702.38px;width:300px;text-align:center;top:294px;font-weight:normal;color:#000;font-size:14px;letter-spacing:-0.250px;">Sound</div>
<div class="t" style="left:702.50px;width:300px;text-align:center;top:310px;font-weight:normal;color:#000;font-size:14px;letter-spacing:0.000px;">Recorder</div>
<svg style="left:952px;top:258px" width="40" height="40" viewBox="952 258 40 40">
<polygon points="957.5,285 961,282 988.5,278 988.5,280 981,287.5 962,287.5" fill="#000070" stroke="#000" stroke-width="1"/>
<polygon points="964,265.5 987,265.5 987,278 964,278" fill="#fff" stroke="#000" stroke-width="1.1"/>
<polygon points="962,268 985,268 985,281 962,281" fill="#fff" stroke="#000" stroke-width="1.1"/>
<polygon points="960,270.5 983,270.5 983,283 960,283" fill="#fff" stroke="#000" stroke-width="1.1"/>
<polygon points="958.5,274 979.5,274 979.5,286 958.5,286" fill="#fff" stroke="#000" stroke-width="1.1"/>
<path d="M959 274L966 265.5" stroke="#000" stroke-width="1.1"/>
<ellipse cx="973.5" cy="266.5" rx="2.5" ry="1.8" fill="#000080"/>
<ellipse cx="978.5" cy="268.5" rx="2.5" ry="1.8" fill="#000080"/>
<ellipse cx="972.5" cy="270.5" rx="2.5" ry="1.8" fill="#000080"/>
<ellipse cx="966.5" cy="272.5" rx="2.5" ry="1.8" fill="#000080"/>
<path d="M963 276.5H974.5M963 278.5H975.5M963 280.5H974.5" stroke="#008080" stroke-width="1"/>
<polygon points="957.5,284.5 979,284.5 981,287.5 960,287.5" fill="#000080"/></svg>
<div class="t" style="left:822.89px;width:300px;text-align:center;top:294px;font-weight:normal;color:#000;font-size:14px;letter-spacing:-0.219px;">Card File</div>
<svg style="left:712px;top:334px" width="40" height="40" viewBox="712 334 40 40">
<rect x="719" y="343" width="30" height="23" fill="#000"/>
<rect x="717.5" y="340.5" width="28" height="22.5" fill="#fff" stroke="#000" stroke-width="1.2"/>
<path d="M731.5 341V363" stroke="#000" stroke-width="1"/>
<path d="M720.5 364.5H745" stroke="#808080" stroke-width="1"/>
<text x="720" y="353" font-family="Liberation Sans" font-weight="bold" font-size="12" fill="#e00000">1</text>
<text x="735" y="353" font-family="Liberation Sans" font-weight="bold" font-size="12" fill="#e00000">2</text>
<path d="M720.5 356.5H727M720.5 358.5H727M735 356.5H742M735 358.5H742" stroke="#000" stroke-width="0.9"/>
<circle cx="731.5" cy="346.5" r="1.2" fill="#fff" stroke="#000" stroke-width="0.8"/>
<circle cx="731.5" cy="356" r="1.2" fill="#fff" stroke="#000" stroke-width="0.8"/></svg>
<div class="t" style="left:583.43px;width:300px;text-align:center;top:372px;font-weight:normal;color:#000;font-size:14px;letter-spacing:-0.143px;">Calendar</div>
<svg style="left:834px;top:334px" width="40" height="40" viewBox="834 334 40 40">
<polygon points="860,355.5 865,348.5 867.5,342.5 862,342.2 857.5,349.5" fill="#f4f4f4" stroke="#000" stroke-width="1"/>
<ellipse cx="844.3" cy="342.5" rx="4.4" ry="2.8" transform="rotate(25 844.3 342.5)" fill="#18c8c0" stroke="#000" stroke-width="1"/>
<polygon points="847.5,338 855,338 854,342.5 850.5,344.5 847.8,341" fill="#a018c0" stroke="#000" stroke-width="0.9"/>
<path d="M857.3 339V348.3L860.5 343.5V346.5" stroke="#000" stroke-width="1" fill="none"/>
<ellipse cx="855.8" cy="349" rx="2" ry="1.6" fill="#208040" stroke="#000" stroke-width="0.6"/>
<polygon points="838.5,353 843,348.5 846,350 846,355.5 841.5,355.5" fill="#f4f4f4" stroke="#000" stroke-width="1"/>
<rect x="846" y="349.2" width="7.5" height="6.3" fill="#fff" stroke="#000" stroke-width="1"/>
<path d="M847.5 352.8h3.5" stroke="#000080" stroke-width="1"/>
<rect x="841.5" y="355.5" width="18.5" height="14" fill="#e8e870" stroke="#000" stroke-width="1.1"/>
<polygon points="860,355.5 865,348.5 865,363.5 860,369.5" fill="#a8a030" stroke="#000" stroke-width="1"/></svg>
<div class="t" style="left:702.98px;width:300px;text-align:center;top:372px;font-weight:normal;color:#000;font-size:14px;letter-spacing:-0.050px;">Object</div>
<div class="t" style="left:703.05px;width:300px;text-align:center;top:388px;font-weight:normal;color:#000;font-size:14px;letter-spacing:0.107px;">Packager</div>
<svg style="left:952px;top:334px" width="40" height="40" viewBox="952 334 40 40">
<polygon points="973.3,340.5 985,346 988.5,359.5 973.3,367.5 957.5,359.8 961.2,346" fill="#e6e2ee" stroke="#000" stroke-width="1.2" stroke-dasharray="1.4 0.6"/>
<polygon points="973.5,352 987.5,346.8 988,359.5 973.5,367" fill="#a8a4a8"/>
<path d="M961.5 346.3L973.5 352L987 346.5M973.5 352V367" stroke="#fff" stroke-width="0.9" fill="none"/>
<ellipse cx="973.2" cy="346.5" rx="2.6" ry="1.3" fill="#800000"/>
<path d="M964.5 352.5L967 351.5L971.5 361.5M968.5 355.5L964.5 359.5" stroke="#0000c0" stroke-width="1.6" fill="none"/>
<path d="M978.5 359.5L984 353.5M980.5 353.5H984V357" stroke="#000" stroke-width="1" fill="none"/></svg>
<div class="t" style="left:822.84px;width:300px;text-align:center;top:372px;font-weight:normal;color:#000;font-size:14px;letter-spacing:-0.312px;">Character</div>
<div class="t" style="left:823.06px;width:300px;text-align:center;top:388px;font-weight:normal;color:#000;font-size:14px;letter-spacing:0.125px;">Map</div>
<div class="" style="left:1081px;top:180px;width:1px;height:230px;background:#000"></div>
<div class="" style="left:1082px;top:180px;width:19px;height:230px;background:#848284"></div>
<div class="" style="left:1082px;top:180px;width:19px;height:21px;background:#d6d3d6;box-shadow:inset 1px 1px 0 #fff, inset -2px -2px 0 #848284;border-bottom:1px solid #000"></div>
<div class="" style="left:1082px;top:201px;width:19px;height:21px;background:#d6d3d6;box-shadow:inset 1px 1px 0 #fff, inset -2px -2px 0 #848284;border-bottom:1px solid #000"></div>
<div class="" style="left:1082px;top:389px;width:19px;height:21px;background:#d6d3d6;box-shadow:inset 1px 1px 0 #fff, inset -2px -2px 0 #848284;border-top:1px solid #000"></div>
<svg style="left:1087px;top:186px" width="9" height="6"><path d="M0 5H8L4 0Z" fill="#000"/></svg>
<svg style="left:1087px;top:396px" width="9" height="6"><path d="M0 0H8L4 5Z" fill="#000"/></svg>
<div class="" style="left:185px;top:425px;width:390px;height:80px;background:#000"></div>
<div class="" style="left:187px;top:427px;width:386px;height:26px;background:#d6d3d6"></div>
<div class="" style="left:213px;top:427px;width:1px;height:26px;background:#000"></div>
<div class="" style="left:187px;top:453px;width:386px;height:1px;background:#000"></div>
<div class="" style="left:187px;top:454px;width:386px;height:49px;background:#c6c3c6"></div>
<div class="ball purple" style="left:191.5px;top:430.0px;width:18px;height:20px"></div>
<svg class="abs" style="left:196.5px;top:436px" width="8" height="10"><path d="M1 0.5 L7 0.5 L4 4 Z" fill="#5a005a"/><rect x="1" y="5.5" width="6" height="2" fill="#7a007a"/></svg>
<div class="t" style="left:218.52px;width:300px;text-align:center;top:433px;font-weight:bold;color:#848284;font-size:14px;letter-spacing:0.038px;">Sid Meier's Civilization II</div>
<div class="ball orange" style="left:526.0px;top:430.0px;width:18px;height:20px"></div>
<div class="ball green" style="left:552.0px;top:430.0px;width:18px;height:20px"></div>
<svg style="left:208px;top:454px" width="36" height="30" viewBox="208 454 36 30">
<circle cx="226" cy="470" r="13.5" fill="#1030e0" stroke="#000" stroke-width="1.2"/>
<path d="M216.55 463.925Q223.3 457.85 232.75 461.9Q226 465.95 216.55 463.925Z" fill="#fff" opacity="0.9"/>
<path d="M215.2 474.725Q224.65 469.325 234.1 472.025Q228.7 478.1 217.9 479.45Z" fill="#108040"/>
<path d="M233.425 470.0Q239.5 474.05 235.45 480.125Q230.05 476.75 233.425 470Z" fill="#fff" opacity="0.9"/><polygon points="215,484 226,472 236,484" fill="#d0c020" stroke="#000" stroke-width="0.8"/><path d="M221 478l5-5" stroke="#505000" stroke-width="1"/></svg>
<svg style="left:318px;top:456px" width="32" height="28" viewBox="318 456 32 28">
<circle cx="333" cy="472" r="11" fill="#1030e0" stroke="#000" stroke-width="1.2"/>
<path d="M325.3 467.05Q330.8 462.1 338.5 465.4Q333 468.7 325.3 467.05Z" fill="#fff" opacity="0.9"/>
<path d="M324.2 475.85Q331.9 471.45 339.6 473.65Q335.2 478.6 326.4 479.7Z" fill="#108040"/>
<path d="M339.05 472.0Q344.0 475.3 340.7 480.25Q336.3 477.5 339.05 472Z" fill="#fff" opacity="0.9"/><path d="M332 484L337 474L340 476L346 484Z" fill="#ffff20" stroke="#000" stroke-width="0.8"/><path d="M335 478l2 2M337 476l2 2M339 475l2 2" stroke="#000" stroke-width="0.8"/></svg>
<div class="" style="left:520px;top:582px;width:437px;height:189px;background:#000"></div>
<div class="" style="left:522px;top:584px;width:433px;height:26px;background:#d6d3d6"></div>
<div class="" style="left:548px;top:584px;width:1px;height:26px;background:#000"></div>
<div class="" style="left:522px;top:610px;width:433px;height:1px;background:#000"></div>
<div class="" style="left:522px;top:611px;width:433px;height:158px;background:#c6c3c6"></div>
<div class="ball orange" style="left:908.0px;top:587.0px;width:18px;height:20px"></div>
<div class="ball green" style="left:934.0px;top:587.0px;width:18px;height:20px"></div>
<svg style="left:726px;top:612px" width="40" height="40" viewBox="726 612 40 40">
<rect x="731.5" y="616.5" width="31" height="31" rx="1.5" fill="#a0a0a0" stroke="#000" stroke-width="1.2"/>
<rect x="734" y="619" width="26" height="22" fill="#e8e8e8" stroke="#000" stroke-width="0.8"/>
<polygon points="734,641 760,641 762,647 732,647" fill="#707070"/>
<text x="735.5" y="630" font-family="Liberation Sans" font-size="9" fill="#000">CAPS</text>
<rect x="739.5" y="632.5" width="15" height="5.5" fill="#00e000" stroke="#000" stroke-width="0.9"/></svg>
<div class="t" style="left:597.37px;width:300px;text-align:center;top:650px;font-weight:normal;color:#000;font-size:14px;letter-spacing:-0.267px;">CapsKey</div>
<svg style="left:804px;top:615px" width="36" height="34" viewBox="804 615 36 34">
<rect x="807.5" y="619" width="29" height="25.5" rx="1.5" fill="#e0e0e0" stroke="#000" stroke-width="1.2"/>
<path d="M836 620V644H809" stroke="#606060" stroke-width="1.2" fill="none"/>
<rect x="810.5" y="622" width="20" height="3" fill="#fff" stroke="#909090" stroke-width="0.6"/>
<rect x="831" y="622" width="3.2" height="3" fill="#f4f4f4" stroke="#909090" stroke-width="0.6"/>
<rect x="810.5" y="628.0" width="3.2" height="3" fill="#f4f4f4" stroke="#909090" stroke-width="0.6"/><rect x="815.5" y="628.0" width="3.2" height="3" fill="#f4f4f4" stroke="#909090" stroke-width="0.6"/><rect x="820.5" y="628.0" width="3.2" height="3" fill="#f4f4f4" stroke="#909090" stroke-width="0.6"/><rect x="825.5" y="628.0" width="3.2" height="3" fill="#f4f4f4" stroke="#909090" stroke-width="0.6"/><rect x="830.5" y="628.0" width="3.2" height="3" fill="#f4f4f4" stroke="#909090" stroke-width="0.6"/><rect x="810.5" y="632.6" width="3.2" height="3" fill="#f4f4f4" stroke="#909090" stroke-width="0.6"/><rect x="815.5" y="632.6" width="3.2" height="3" fill="#f4f4f4" stroke="#909090" stroke-width="0.6"/><rect x="820.5" y="632.6" width="3.2" height="3" fill="#f4f4f4" stroke="#909090" stroke-width="0.6"/><rect x="825.5" y="632.6" width="3.2" height="3" fill="#f4f4f4" stroke="#909090" stroke-width="0.6"/><rect x="830.5" y="632.6" width="3.2" height="3" fill="#f4f4f4" stroke="#909090" stroke-width="0.6"/><rect x="810.5" y="637.2" width="3.2" height="3" fill="#f4f4f4" stroke="#909090" stroke-width="0.6"/><rect x="815.5" y="637.2" width="3.2" height="3" fill="#f4f4f4" stroke="#909090" stroke-width="0.6"/><rect x="820.5" y="637.2" width="3.2" height="3" fill="#f4f4f4" stroke="#909090" stroke-width="0.6"/><rect x="825.5" y="637.2" width="3.2" height="3" fill="#f4f4f4" stroke="#909090" stroke-width="0.6"/><rect x="830.5" y="637.2" width="3.2" height="3" fill="#f4f4f4" stroke="#909090" stroke-width="0.6"/></svg>
<div class="t" style="left:672.98px;width:300px;text-align:center;top:650px;font-weight:normal;color:#000;font-size:14px;letter-spacing:-0.044px;">SimpleCalc</div>
<svg style="left:878px;top:612px" width="38" height="40" viewBox="878 612 38 40">
<rect x="882" y="616.5" width="30" height="31" rx="1.5" fill="#e0e0e0" stroke="#000" stroke-width="1.2"/>
<path d="M911 618V646.5H884" stroke="#606060" stroke-width="1.2" fill="none"/>
<rect x="885" y="619" width="18" height="7" fill="#fff" stroke="#a0a0a0" stroke-width="0.6"/>
<path d="M906 621l1.5-2l1.5 2M906 623.5l1.5 2l1.5-2" stroke="#2020a0" stroke-width="0.8" fill="none"/>
<rect x="885" y="627" width="18" height="2" fill="#fff"/>
<rect x="905.5" y="627" width="3.2" height="3" fill="#f4f4f4" stroke="#909090" stroke-width="0.6"/>
<rect x="885.5" y="631" width="3.2" height="3" fill="#f4f4f4" stroke="#909090" stroke-width="0.6"/><rect x="890.5" y="631" width="3.2" height="3" fill="#f4f4f4" stroke="#909090" stroke-width="0.6"/><rect x="895.5" y="631" width="3.2" height="3" fill="#f4f4f4" stroke="#909090" stroke-width="0.6"/><rect x="900.5" y="631" width="3.2" height="3" fill="#f4f4f4" stroke="#909090" stroke-width="0.6"/><rect x="905.5" y="631" width="3.2" height="3" fill="#f4f4f4" stroke="#909090" stroke-width="0.6"/><rect x="885.5" y="636" width="3.2" height="3" fill="#f4f4f4" stroke="#909090" stroke-width="0.6"/><rect x="890.5" y="636" width="3.2" height="3" fill="#f4f4f4" stroke="#909090" stroke-width="0.6"/><rect x="895.5" y="636" width="3.2" height="3" fill="#f4f4f4" stroke="#909090" stroke-width="0.6"/><rect x="900.5" y="636" width="3.2" height="3" fill="#f4f4f4" stroke="#909090" stroke-width="0.6"/><rect x="905.5" y="636" width="3.2" height="3" fill="#f4f4f4" stroke="#909090" stroke-width="0.6"/><rect x="885.5" y="641" width="3.2" height="3" fill="#f4f4f4" stroke="#909090" stroke-width="0.6"/><rect x="890.5" y="641" width="3.2" height="3" fill="#f4f4f4" stroke="#909090" stroke-width="0.6"/><rect x="895.5" y="641" width="3.2" height="3" fill="#f4f4f4" stroke="#909090" stroke-width="0.6"/><rect x="900.5" y="641" width="3.2" height="3" fill="#f4f4f4" stroke="#909090" stroke-width="0.6"/><rect x="905.5" y="641" width="3.2" height="3" fill="#f4f4f4" stroke="#909090" stroke-width="0.6"/></svg>
<div class="t" style="left:747.49px;width:300px;text-align:center;top:650px;font-weight:normal;color:#000;font-size:14px;letter-spacing:-0.013px;">PaperCalc</div>
<svg style="left:722px;top:688px" width="44" height="40" viewBox="722 688 44 40"><g transform="translate(0 0)">
<path d="M745 709L758 707L756 716L744 717Z" fill="#8a888a"/>
<g transform="translate(2.5 -1.5)"><path d="M732.5 702Q732 693.5 740 693.5Q748.5 693.5 748.5 700.5Q748.5 705.5 742.5 707.5L742 712" stroke="#000" stroke-width="6.6" fill="none"/><path d="M732.5 702Q732 693.5 740 693.5Q748.5 693.5 748.5 700.5Q748.5 705.5 742.5 707.5L742 712" stroke="#a8a000" stroke-width="4.4" fill="none"/>
<rect x="736.5" y="715.5" width="8" height="7" fill="#a8a000" stroke="#000" stroke-width="1.1"/></g>
<path d="M732.5 702Q732 693.5 740 693.5Q748.5 693.5 748.5 700.5Q748.5 705.5 742.5 707.5L742 712" stroke="#000" stroke-width="6.6" fill="none"/><path d="M732.5 702Q732 693.5 740 693.5Q748.5 693.5 748.5 700.5Q748.5 705.5 742.5 707.5L742 712" stroke="#ffff10" stroke-width="4.4" fill="none"/>
<rect x="736.5" y="715.5" width="8" height="7" fill="#ffff10" stroke="#000" stroke-width="1.1"/></g></svg>
<div class="t" style="left:589.65px;width:300px;text-align:center;top:727px;font-weight:normal;color:#000;font-size:14px;letter-spacing:-0.700px;">OSFrame</div>
<div class="t" style="left:589.95px;width:300px;text-align:center;top:742px;font-weight:normal;color:#000;font-size:14px;letter-spacing:-0.100px;">Help</div>
<svg style="left:786px;top:690px" width="44" height="40" viewBox="786 690 44 40"><g transform="translate(64.5 2.5)">
<path d="M745 709L758 707L756 716L744 717Z" fill="#8a888a"/>
<g transform="translate(2.5 -1.5)"><path d="M732.5 702Q732 693.5 740 693.5Q748.5 693.5 748.5 700.5Q748.5 705.5 742.5 707.5L742 712" stroke="#000" stroke-width="6.6" fill="none"/><path d="M732.5 702Q732 693.5 740 693.5Q748.5 693.5 748.5 700.5Q748.5 705.5 742.5 707.5L742 712" stroke="#a8a000" stroke-width="4.4" fill="none"/>
<rect x="736.5" y="715.5" width="8" height="7" fill="#a8a000" stroke="#000" stroke-width="1.1"/></g>
<path d="M732.5 702Q732 693.5 740 693.5Q748.5 693.5 748.5 700.5Q748.5 705.5 742.5 707.5L742 712" stroke="#000" stroke-width="6.6" fill="none"/><path d="M732.5 702Q732 693.5 740 693.5Q748.5 693.5 748.5 700.5Q748.5 705.5 742.5 707.5L742 712" stroke="#ffff10" stroke-width="4.4" fill="none"/>
<rect x="736.5" y="715.5" width="8" height="7" fill="#ffff10" stroke="#000" stroke-width="1.1"/></g></svg>
<div class="t" style="left:654.82px;width:300px;text-align:center;top:728px;font-weight:normal;color:#000;font-size:14px;letter-spacing:-0.370px;">ButtonMaker</div>
<div class="t" style="left:654.95px;width:300px;text-align:center;top:744px;font-weight:normal;color:#000;font-size:14px;letter-spacing:-0.100px;">Help</div>
<svg style="left:872px;top:690px" width="40" height="40" viewBox="872 690 40 40">
<rect x="876.5" y="696.5" width="31" height="14" fill="#fff" stroke="#000" stroke-width="1.2"/>
<path d="M878.5 699.5H905.5M878.5 702H905.5M878.5 704.5H905.5M878.5 707H905.5" stroke="#000" stroke-width="0.8"/>
<path d="M882 699V708M900 699V708" stroke="#000" stroke-width="0.8"/>
<ellipse cx="886" cy="705" rx="1.8" ry="1.3" fill="#000"/><ellipse cx="893" cy="702.5" rx="1.8" ry="1.3" fill="#000"/>
<path d="M887.5 705V698M894.5 702.5V695.5L897 697" stroke="#000" stroke-width="1" fill="none"/>
<rect x="876.5" y="712.5" width="31" height="13.5" fill="#fff" stroke="#000" stroke-width="1.2"/>
<path d="M880 713V725.5" stroke="#000" stroke-width="1"/><path d="M884 713V725.5" stroke="#000" stroke-width="1"/><path d="M888 713V725.5" stroke="#000" stroke-width="1"/><path d="M892 713V725.5" stroke="#000" stroke-width="1"/><path d="M896 713V725.5" stroke="#000" stroke-width="1"/><path d="M900 713V725.5" stroke="#000" stroke-width="1"/><path d="M904 713V725.5" stroke="#000" stroke-width="1"/><rect x="882.0" y="713" width="2.4" height="7" fill="#000"/><rect x="886.0" y="713" width="2.4" height="7" fill="#000"/><rect x="894.0" y="713" width="2.4" height="7" fill="#000"/><rect x="898.0" y="713" width="2.4" height="7" fill="#000"/><rect x="902.0" y="713" width="2.4" height="7" fill="#000"/></svg>
<div class="t" style="left:741.97px;width:300px;text-align:center;top:728px;font-weight:normal;color:#000;font-size:14px;letter-spacing:-0.067px;">NoiseMaker</div>
<div class="" style="left:27px;top:481px;width:681px;height:449px;background:#000"></div>
<div class="" style="left:29px;top:483px;width:677px;height:26px;background:#d6d3d6"></div>
<div class="" style="left:29px;top:483px;width:26px;height:26px;background:#d6d3d6;box-shadow:inset 1px 1px 0 #fff, inset -1px -1px 0 #848284"></div>
<div class="" style="left:55px;top:483px;width:1px;height:26px;background:#000"></div>
<div class="" style="left:29px;top:509px;width:677px;height:1px;background:#000"></div>
<div class="" style="left:29px;top:510px;width:677px;height:26px;background:#d6d3d6"></div>
<div class="" style="left:29px;top:536px;width:677px;height:1px;background:#000"></div>
<div class="" style="left:29px;top:537px;width:677px;height:391px;background:#c6c3c6"></div>
<div class="ball purple" style="left:32.5px;top:486.0px;width:18px;height:20px"></div>
<div class="t" style="left:217.79px;width:300px;text-align:center;top:489px;font-weight:bold;color:#000;font-size:14px;letter-spacing:-0.417px;-webkit-text-stroke:0.25px #000;">OSFrame</div>
<div class="ball orange" style="left:684.0px;top:486.0px;width:18px;height:20px"></div>
<div class="t" style="left:36.60px;top:515px;font-weight:bold;color:#000;font-size:14px;letter-spacing:-0.100px;-webkit-text-stroke:0.25px #000;"><u>F</u>ile</div>
<div class="t" style="left:76.20px;top:515px;font-weight:bold;color:#000;font-size:14px;letter-spacing:-0.383px;-webkit-text-stroke:0.25px #000;"><u>O</u>ptions</div>
<div class="" style="left:135px;top:510px;width:117px;height:26px;background:#000084"></div>
<div class="t" style="left:141.80px;top:515px;font-weight:bold;color:#fff;font-size:14px;letter-spacing:-0.220px;-webkit-text-stroke:0.25px #fff;"><u>D</u>epth of effects</div>
<div class="t" style="left:259.40px;top:515px;font-weight:bold;color:#000;font-size:14px;letter-spacing:-0.037px;-webkit-text-stroke:0.25px #000;"><u>U</u>tilities</div>
<div class="t" style="left:325.00px;top:515px;font-weight:bold;color:#000;font-size:14px;letter-spacing:-0.067px;-webkit-text-stroke:0.25px #000;"><u>H</u>elp</div>
<div class="" style="left:38px;top:545px;width:311px;height:84px;border:1px solid #000"></div>
<div class="" style="left:45px;top:544px;width:95px;height:14px;background:#c6c3c6"></div>
<div class="t" style="left:47.00px;top:541px;font-weight:bold;color:#000;font-size:14px;letter-spacing:0.350px;-webkit-text-stroke:0.25px #000;">Color Schemes</div>
<div class="" style="left:43px;top:565px;width:302px;height:24px;background:#000"></div>
<div class="" style="left:44px;top:566px;width:280px;height:22px;background:#000084;outline:1px dotted #ffffc0;outline-offset:-2px"></div>
<div class="" style="left:324px;top:565px;width:21px;height:24px;background:#d6d3d6;border:1px solid #000;box-shadow:inset 1px 1px 0 #fff, inset -2px -2px 0 #848284"></div>
<svg style="left:329px;top:573px" width="11" height="7"><path d="M0 0H10L5 6Z" fill="#000"/></svg>
<div class="" style="left:43px;top:597px;width:302px;height:28px;background:#d6d3d6;border:1px solid #000;box-shadow:inset 1px 1px 0 #fff, inset -2px -2px 0 #848284"></div>
<div class="t" style="left:66.00px;top:604px;font-weight:bold;color:#000;font-size:14px;letter-spacing:0.600px;-webkit-text-stroke:0.25px #000;"><u>A</u>dd Scheme</div>
<div class="" style="left:38px;top:633px;width:311px;height:224px;border:1px solid #000"></div>
<div class="" style="left:48px;top:644px;width:270px;height:174px;background:#000"></div>
<div class="" style="left:50px;top:646px;width:266px;height:26px;background:#d6d3d6"></div>
<div class="" style="left:50px;top:646px;width:26px;height:26px;background:#d6d3d6;box-shadow:inset 1px 1px 0 #fff, inset -2px -2px 0 #848284"></div>
<div class="ball purple" style="left:54.0px;top:649.0px;width:18px;height:20px"></div>
<div class="" style="left:50px;top:673px;width:266px;height:26px;background:#d6d3d6"></div>
<div class="t" style="left:54.00px;top:674px;font-weight:bold;color:#000;font-size:14px;letter-spacing:-0.300px;-webkit-text-stroke:0.25px #000;">File</div>
<div class="" style="left:50px;top:700px;width:266px;height:116px;background:#fff"></div>
<div class="" style="left:76px;top:673px;width:262px;height:173px;background:#000"></div>
<div class="" style="left:78px;top:675px;width:258px;height:25px;background:#d6d3d6"></div>
<div class="" style="left:78px;top:675px;width:26px;height:25px;background:#d6d3d6;box-shadow:inset 1px 1px 0 #fff, inset -2px -2px 0 #848284"></div>
<div class="ball purple" style="left:81.7px;top:677.0px;width:18px;height:20px"></div>
<div class="" style="left:78px;top:701px;width:258px;height:26px;background:#d6d3d6"></div>
<div class="t" style="left:82.00px;top:702px;font-weight:bold;color:#000;font-size:14px;letter-spacing:-0.300px;-webkit-text-stroke:0.25px #000;">File&nbsp;&nbsp;Edit</div>
<div class="" style="left:78px;top:728px;width:258px;height:18px;background:#d6d3d6"></div>
<div class="t" style="left:82.00px;top:729px;font-weight:bold;color:#000;font-size:14px;letter-spacing:-0.300px;-webkit-text-stroke:0.25px #000;">Disabled</div>
<div class="" style="left:78px;top:746px;width:258px;height:19px;background:#000084"></div>
<div class="t" style="left:82.00px;top:747px;font-weight:bold;color:#fff;font-size:14px;letter-spacing:-0.300px;-webkit-text-stroke:0.25px #fff;">Highlighted</div>
<div class="" style="left:78px;top:765px;width:238px;height:79px;background:#fff"></div>
<div class="" style="left:105px;top:764px;width:184px;height:64px;background:#c6c3c6;border:1px solid #000;border-top:none"></div>
<div class="t" style="left:47.07px;width:300px;text-align:center;top:805px;font-weight:bold;color:#000;font-size:14px;letter-spacing:-0.060px;-webkit-text-stroke:0.25px #000;">Window Text</div>
<div class="" style="left:234px;top:755px;width:50px;height:22px;background:#d6d3d6;border:1px solid #000;box-shadow:inset 1px 1px 0 #fff, inset -2px -2px 0 #848284"></div>
<div class="t" style="left:108.27px;width:300px;text-align:center;top:756px;font-weight:bold;color:#000;font-size:14px;letter-spacing:-1.467px;-webkit-text-stroke:0.25px #000;">Exit</div>
<div class="" style="left:316px;top:765px;width:1px;height:79px;background:#000"></div>
<div class="" style="left:317px;top:765px;width:19px;height:59px;background:#848284"></div>
<div class="" style="left:317px;top:824px;width:19px;height:20px;background:#d6d3d6;box-shadow:inset 1px 1px 0 #fff, inset -2px -2px 0 #848284;border-top:1px solid #000"></div>
<svg style="left:322px;top:831px" width="9" height="5"><path d="M0 0H8L4 4Z" fill="#000"/></svg>
<div class="" style="left:38px;top:861px;width:311px;height:28px;background:#d6d3d6;border:1px solid #000;box-shadow:inset 1px 1px 0 #fff, inset -2px -2px 0 #848284"></div>
<div class="t" style="left:41.82px;width:300px;text-align:center;top:868px;font-weight:bold;color:#848284;font-size:14px;letter-spacing:0.433px;"><u>P</u>review</div>
<div class="" style="left:38px;top:893px;width:140px;height:28px;background:#d6d3d6;border:1px solid #000;box-shadow:inset 1px 1px 0 #fff, inset -2px -2px 0 #848284"></div>
<div class="t" style="left:-43.60px;width:300px;text-align:center;top:900px;font-weight:bold;color:#000;font-size:14px;letter-spacing:1.400px;-webkit-text-stroke:0.25px #000;"><u>S</u>ave</div>
<div class="" style="left:209px;top:893px;width:140px;height:28px;background:#d6d3d6;border:1px solid #000;box-shadow:inset 1px 1px 0 #fff, inset -2px -2px 0 #848284"></div>
<div class="t" style="left:127.49px;width:300px;text-align:center;top:900px;font-weight:bold;color:#000;font-size:14px;letter-spacing:0.483px;-webkit-text-stroke:0.25px #000;"><u>R</u>estore</div>
<div class="t" style="left:379.80px;top:542px;font-weight:bold;color:#000;font-size:14px;letter-spacing:0.286px;-webkit-text-stroke:0.25px #000;">Screen <u>E</u>lement:</div>
<div class="" style="left:380px;top:561px;width:315px;height:24px;border:1px solid #000"></div>
<div class="t" style="left:386.80px;top:565px;font-weight:bold;color:#000;font-size:14px;letter-spacing:0.383px;-webkit-text-stroke:0.25px #000;">Desktop</div>
<div class="" style="left:674px;top:561px;width:21px;height:24px;background:#d6d3d6;border:1px solid #000;box-shadow:inset 1px 1px 0 #fff, inset -2px -2px 0 #848284"></div>
<svg style="left:679px;top:571px" width="11" height="7"><path d="M0 0H10L5 6Z" fill="#000"/></svg>
<div class="t" style="left:379.50px;top:602px;font-weight:bold;color:#000;font-size:14px;letter-spacing:0.308px;-webkit-text-stroke:0.25px #000;"><u>B</u>asic Colors:</div>
<div class="" style="left:383px;top:624px;width:34px;height:23px;background:#ff8080;border:1px solid #000"></div>
<div class="" style="left:422px;top:624px;width:34px;height:23px;background:#ffffe8;border:1px solid #000"></div>
<div class="" style="left:461px;top:624px;width:34px;height:23px;background:#80ff80;border:1px solid #000"></div>
<div class="" style="left:500px;top:624px;width:34px;height:23px;background:#00ff80;border:1px solid #000"></div>
<div class="" style="left:539px;top:624px;width:34px;height:23px;background:#80ffff;border:1px solid #000"></div>
<div class="" style="left:578px;top:624px;width:34px;height:23px;background:#0080ff;border:1px solid #000"></div>
<div class="" style="left:617px;top:624px;width:34px;height:23px;background:#ff80c0;border:1px solid #000"></div>
<div class="" style="left:656px;top:624px;width:34px;height:23px;background:#ff80ff;border:1px solid #000"></div>
<div class="" style="left:383px;top:652px;width:34px;height:23px;background:#ff0000;border:1px solid #000"></div>
<div class="" style="left:422px;top:652px;width:34px;height:23px;background:#ffff80;border:1px solid #000"></div>
<div class="" style="left:461px;top:652px;width:34px;height:23px;background:#80ff00;border:1px solid #000"></div>
<div class="" style="left:500px;top:652px;width:34px;height:23px;background:#00ff40;border:1px solid #000"></div>
<div class="" style="left:539px;top:652px;width:34px;height:23px;background:#00ffff;border:1px solid #000"></div>
<div class="" style="left:578px;top:652px;width:34px;height:23px;background:#0080c0;border:1px solid #000"></div>
<div class="" style="left:617px;top:652px;width:34px;height:23px;background:#8080c0;border:1px solid #000"></div>
<div class="" style="left:656px;top:652px;width:34px;height:23px;background:#ff00ff;border:1px solid #000"></div>
<div class="" style="left:383px;top:680px;width:34px;height:23px;background:#804040;border:1px solid #000"></div>
<div class="" style="left:422px;top:680px;width:34px;height:23px;background:#ffff00;border:1px solid #000"></div>
<div class="" style="left:461px;top:680px;width:34px;height:23px;background:#00ff00;border:1px solid #000"></div>
<div class="" style="left:500px;top:680px;width:34px;height:23px;background:#008080;border:1px solid #000"></div>
<div class="" style="left:539px;top:680px;width:34px;height:23px;background:#004080;border:1px solid #000"></div>
<div class="" style="left:578px;top:680px;width:34px;height:23px;background:#8080ff;border:1px solid #000"></div>
<div class="" style="left:617px;top:680px;width:34px;height:23px;background:#800040;border:1px solid #000"></div>
<div class="" style="left:656px;top:680px;width:34px;height:23px;background:#ff0080;border:1px solid #000"></div>
<div class="" style="left:383px;top:708px;width:34px;height:23px;background:#800000;border:1px solid #000"></div>
<div class="" style="left:422px;top:708px;width:34px;height:23px;background:#ff8000;border:1px solid #000"></div>
<div class="" style="left:461px;top:708px;width:34px;height:23px;background:#008000;border:1px solid #000"></div>
<div class="" style="left:500px;top:708px;width:34px;height:23px;background:#008040;border:1px solid #000"></div>
<div class="" style="left:539px;top:708px;width:34px;height:23px;background:#0000ff;border:1px solid #000"></div>
<div class="" style="left:578px;top:708px;width:34px;height:23px;background:#0000a0;border:1px solid #000"></div>
<div class="" style="left:617px;top:708px;width:34px;height:23px;background:#800080;border:1px solid #000"></div>
<div class="" style="left:656px;top:708px;width:34px;height:23px;background:#8000ff;border:1px solid #000"></div>
<div class="" style="left:383px;top:736px;width:34px;height:23px;background:#400000;border:1px solid #000"></div>
<div class="" style="left:422px;top:736px;width:34px;height:23px;background:#804000;border:1px solid #000"></div>
<div class="" style="left:461px;top:736px;width:34px;height:23px;background:#004000;border:1px solid #000"></div>
<div class="" style="left:500px;top:736px;width:34px;height:23px;background:#004040;border:1px solid #000"></div>
<div class="" style="left:539px;top:736px;width:34px;height:23px;background:#000080;border:1px solid #000"></div>
<div class="" style="left:578px;top:736px;width:34px;height:23px;background:#000040;border:1px solid #000"></div>
<div class="" style="left:617px;top:736px;width:34px;height:23px;background:#400040;border:1px solid #000"></div>
<div class="" style="left:656px;top:736px;width:34px;height:23px;background:#400080;border:1px solid #000"></div>
<div class="" style="left:383px;top:764px;width:34px;height:23px;background:#000000;border:1px solid #000"></div>
<div class="" style="left:422px;top:764px;width:34px;height:23px;background:#808000;border:1px solid #000"></div>
<div class="" style="left:461px;top:764px;width:34px;height:23px;background:#808040;border:1px solid #000"></div>
<div class="" style="left:500px;top:764px;width:34px;height:23px;background:#808080;border:1px solid #000"></div>
<div class="" style="left:539px;top:764px;width:34px;height:23px;background:#408080;border:1px solid #000"></div>
<div class="" style="left:578px;top:764px;width:34px;height:23px;background:#c6c3c6;border:2px solid #000"></div>
<div class="" style="left:617px;top:764px;width:34px;height:23px;background:#808080;border:1px solid #000"></div>
<div class="" style="left:656px;top:764px;width:34px;height:23px;background:#ffffff;border:1px solid #000"></div>
<div class="t" style="left:379.50px;top:806px;font-weight:bold;color:#000;font-size:14px;letter-spacing:0.054px;-webkit-text-stroke:0.25px #000;"><u>C</u>ustom Colors:</div>
<div class="" style="left:383px;top:828px;width:34px;height:23px;background:#d6d3d6;border:1px solid #000"></div>
<div class="" style="left:422px;top:828px;width:34px;height:23px;background:#d6d3d6;border:1px solid #000"></div>
<div class="" style="left:461px;top:828px;width:34px;height:23px;background:#fff;border:1px solid #000"></div>
<div class="" style="left:500px;top:828px;width:34px;height:23px;background:#fff;border:1px solid #000"></div>
<div class="" style="left:539px;top:828px;width:34px;height:23px;background:#fff;border:1px solid #000"></div>
<div class="" style="left:578px;top:828px;width:34px;height:23px;background:#fff;border:1px solid #000"></div>
<div class="" style="left:617px;top:828px;width:34px;height:23px;background:#fff;border:1px solid #000"></div>
<div class="" style="left:656px;top:828px;width:34px;height:23px;background:#fff;border:1px solid #000"></div>
<div class="" style="left:383px;top:856px;width:34px;height:23px;background:#308060;border:1px solid #000"></div>
<div class="" style="left:422px;top:856px;width:34px;height:23px;background:#fff;border:1px solid #000"></div>
<div class="" style="left:461px;top:856px;width:34px;height:23px;background:#fff;border:1px solid #000"></div>
<div class="" style="left:500px;top:856px;width:34px;height:23px;background:#fff;border:1px solid #000"></div>
<div class="" style="left:539px;top:856px;width:34px;height:23px;background:#fff;border:1px solid #000"></div>
<div class="" style="left:578px;top:856px;width:34px;height:23px;background:#fff;border:1px solid #000"></div>
<div class="" style="left:617px;top:856px;width:34px;height:23px;background:#fff;border:1px solid #000"></div>
<div class="" style="left:656px;top:856px;width:34px;height:23px;background:#fff;border:1px solid #000"></div>
<div class="" style="left:380px;top:893px;width:315px;height:28px;background:#d6d3d6;border:1px solid #000;box-shadow:inset 1px 1px 0 #fff, inset -2px -2px 0 #848284"></div>
<div class="t" style="left:385.34px;width:300px;text-align:center;top:900px;font-weight:bold;color:#000;font-size:14px;letter-spacing:0.074px;-webkit-text-stroke:0.25px #000;">Defi<u>n</u>e Custom Colors</div>
<div class="" style="left:135px;top:536px;width:199px;height:230px;background:#000"></div>
<div class="" style="left:136px;top:537px;width:196px;height:227px;background:#d6d3d6"></div>
<div class="t" style="left:150.00px;top:538px;font-weight:bold;color:#000;font-size:14px;letter-spacing:-0.358px;-webkit-text-stroke:0.25px #000;"><u>A</u>pplication Control Menus</div>
<svg style="left:139px;top:543px" width="9" height="8"><path d="M4 0V6M1 3L4 6L7 3" stroke="#000" stroke-width="1.6" fill="none"/></svg>
<div class="t" style="left:150.00px;top:556px;font-weight:bold;color:#000;font-size:14px;letter-spacing:-0.310px;-webkit-text-stroke:0.25px #000;"><u>D</u>ocument Control Menus</div>
<svg style="left:139px;top:561px" width="9" height="8"><path d="M4 0V6M1 3L4 6L7 3" stroke="#000" stroke-width="1.6" fill="none"/></svg>
<div class="t" style="left:151.00px;top:574px;font-weight:bold;color:#000;font-size:14px;letter-spacing:-0.100px;-webkit-text-stroke:0.25px #000;"><u>T</u>itle Bars</div>
<div class="t" style="left:150.00px;top:592px;font-weight:bold;color:#000;font-size:14px;letter-spacing:-0.083px;-webkit-text-stroke:0.25px #000;"><u>B</u>orders</div>
<svg style="left:139px;top:597px" width="9" height="8"><path d="M4 0V6M1 3L4 6L7 3" stroke="#000" stroke-width="1.6" fill="none"/></svg>
<div class="" style="left:136px;top:614px;width:196px;height:1px;background:#000"></div>
<div class="" style="left:136px;top:620px;width:196px;height:18px;background:#000084"></div>
<div class="t" style="left:150.00px;top:621px;font-weight:bold;color:#fff;font-size:14px;letter-spacing:-0.085px;-webkit-text-stroke:0.25px #fff;">Active Title Bar Text</div>
<div class="t" style="left:150.00px;top:639px;font-weight:bold;color:#000;font-size:14px;letter-spacing:-0.169px;-webkit-text-stroke:0.25px #000;">Active Title Bars</div>
<div class="t" style="left:150.00px;top:657px;font-weight:bold;color:#000;font-size:14px;letter-spacing:-0.292px;-webkit-text-stroke:0.25px #000;">Active Borders</div>
<div class="t" style="left:150.50px;top:675px;font-weight:bold;color:#000;font-size:14px;letter-spacing:-0.023px;-webkit-text-stroke:0.25px #000;">Inactive Title Bar Text</div>
<svg style="left:324px;top:677px" width="7" height="10"><path d="M0 0L6 5L0 10Z" fill="#808080"/></svg>
<div class="t" style="left:150.50px;top:693px;font-weight:bold;color:#000;font-size:14px;letter-spacing:-0.061px;-webkit-text-stroke:0.25px #000;">Inactive Title Bars</div>
<svg style="left:324px;top:695px" width="7" height="10"><path d="M0 0L6 5L0 10Z" fill="#808080"/></svg>
<div class="t" style="left:150.50px;top:711px;font-weight:bold;color:#000;font-size:14px;letter-spacing:-0.153px;-webkit-text-stroke:0.25px #000;">Inactive Borders</div>
<svg style="left:324px;top:713px" width="7" height="10"><path d="M0 0L6 5L0 10Z" fill="#808080"/></svg>
<div class="t" style="left:150.50px;top:729px;font-weight:bold;color:#000;font-size:14px;letter-spacing:-0.018px;-webkit-text-stroke:0.25px #000;">Dialog Boxes</div>
<svg style="left:324px;top:731px" width="7" height="10"><path d="M0 0L6 5L0 10Z" fill="#808080"/></svg>
<div class="t" style="left:150.50px;top:747px;font-weight:bold;color:#000;font-size:14px;letter-spacing:-0.050px;-webkit-text-stroke:0.25px #000;">Menu Bars</div>
<svg style="left:324px;top:749px" width="7" height="10"><path d="M0 0L6 5L0 10Z" fill="#808080"/></svg>
<div class="" style="left:324px;top:619px;width:81px;height:57px;background:#000"></div>
<div class="" style="left:325px;top:620px;width:78px;height:54px;background:#d6d3d6"></div>
<div class="" style="left:325px;top:620px;width:78px;height:18px;background:#000084"></div>
<div class="t" style="left:339.80px;top:621px;font-weight:bold;color:#fff;font-size:14px;letter-spacing:-0.140px;-webkit-text-stroke:0.25px #fff;"><u>N</u>ormal</div>
<div class="t" style="left:339.80px;top:639px;font-weight:bold;color:#000;font-size:14px;letter-spacing:-0.600px;-webkit-text-stroke:0.25px #000;"><u>S</u>hadow</div>
<div class="t" style="left:339.80px;top:657px;font-weight:bold;color:#000;font-size:14px;letter-spacing:-0.533px;-webkit-text-stroke:0.25px #000;"><u>E</u>dge</div>
<svg style="left:328px;top:662px" width="9" height="8"><path d="M4 0V6M1 3L4 6L7 3" stroke="#000" stroke-width="1.6" fill="none"/></svg>
<svg style="left:20px;top:945px" width="38" height="38" viewBox="20 945 38 38">
<rect x="22.5" y="948" width="32.5" height="32" fill="#8a8898"/>
<circle cx="38.5" cy="966" r="13" fill="none" stroke="#f0e020" stroke-width="1.2"/>
<path d="M40 949L44 955L50.5 962.5" stroke="#20d040" stroke-width="1" fill="none"/>
<path d="M24.5 970.5Q29 976 35.5 978" stroke="#d03020" stroke-width="1.2" fill="none"/>
<text x="27.5" y="970.5" font-family="Liberation Sans" font-size="10" fill="#f0e020">OS/2</text></svg>
<svg style="left:94px;top:944px" width="40" height="40" viewBox="94 944 40 40"><g transform="translate(-374.5 766)">
<polygon points="484.5,183.8 499.5,183.8 495,194 480.5,194" fill="#fff" stroke="#000" stroke-width="1.2"/>
<path d="M486.2 186.4h9 M485.3 188.4h9 M484.4 190.4h9 M483.6 192.4h9" stroke="#1020c0" stroke-width="1"/>
<rect x="476.5" y="205" width="23.5" height="6.5" fill="#d8d4d4" stroke="#000" stroke-width="1.2"/>
<path d="M476 193.5H502.5V202.5L499.5 205.5H476Q473.5 205.5 473.5 203V196Q473.5 193.5 476 193.5Z" fill="#e2dede" stroke="#000" stroke-width="1.2"/>
<path d="M493.5 198h3" stroke="#c04040" stroke-width="1"/></g></svg>
<svg style="left:168px;top:944px" width="42" height="42" viewBox="168 944 42 42"><g transform="translate(-664 767)">
<path d="M845.5 183.8C852 182.5 861 186 863.5 194C865 199 868 205 865 210C862 214 853 214.5 847 212L843 214L844 210.5C838 206 836 197 838 190.5C839.5 186.5 842 184.5 845.5 183.8Z" fill="#f0f080" stroke="#000" stroke-width="1.3"/>
<ellipse cx="849.8" cy="189.5" rx="4.3" ry="2.7" fill="#e020e0"/>
<ellipse cx="843.8" cy="195.8" rx="3.6" ry="2.7" fill="#20c020"/>
<ellipse cx="846.8" cy="203.3" rx="3.8" ry="3.2" fill="#e00000"/>
<ellipse cx="855.7" cy="207.7" rx="4.2" ry="2.7" fill="#0018e0"/>
<circle cx="857" cy="199.5" r="2.6" fill="#202060" stroke="#000" stroke-width="1"/>
<path d="M857 199.5L867 187" stroke="#000" stroke-width="2"/>
<path d="M858.5 197L866 188" stroke="#fff" stroke-width="0.7"/></g></svg>
<svg style="left:254px;top:942px" width="46" height="42" viewBox="254 942 46 42">
<rect x="259" y="946" width="36" height="24" fill="#d0ccd0"/>
<rect x="259" y="953" width="36" height="1.8" fill="#000"/><rect x="259" y="968" width="36" height="1.8" fill="#000"/><rect x="259" y="953" width="3" height="17" fill="#000"/>
<rect x="288" y="958" width="7" height="1.5" fill="#000"/>

<circle cx="275" cy="958" r="13.2" fill="#1030e0" stroke="#000" stroke-width="1.2"/>
<path d="M265.76 952.06Q272.36 946.12 281.6 950.08Q275 954.04 265.76 952.06Z" fill="#fff" opacity="0.9"/>
<path d="M264.44 962.62Q273.68 957.34 282.92 959.98Q277.64 965.92 267.08 967.24Z" fill="#108040"/>
<path d="M282.26 958.0Q288.2 961.96 284.24 967.9Q278.96 964.6 282.26 958Z" fill="#fff" opacity="0.9"/><polygon points="259,977.5 274.5,961.5 291,977.5" fill="#d8c820" stroke="#000" stroke-width="1"/><polygon points="259.8,977 274.5,962.5 274.5,977" fill="#908020"/></svg>
<div class="" style="left:12px;top:982px;width:55px;height:16px;background:#cbcbcb"></div>
<div class="t" style="left:-111.02px;width:300px;text-align:center;top:983px;font-weight:normal;color:#000;font-size:14px;letter-spacing:-0.042px;">Desktop</div>
<div class="" style="left:85px;top:982px;width:58px;height:32px;background:#cbcbcb"></div>
<div class="t" style="left:-36.55px;width:300px;text-align:center;top:983px;font-weight:normal;color:#000;font-size:14px;letter-spacing:-0.100px;">Print</div>
<div class="t" style="left:-36.57px;width:300px;text-align:center;top:999px;font-weight:normal;color:#000;font-size:14px;letter-spacing:-0.133px;">Manager</div>
<div class="" style="left:151px;top:982px;width:77px;height:32px;background:#cbcbcb"></div>
<div class="t" style="left:39.45px;width:300px;text-align:center;top:983px;font-weight:normal;color:#000;font-size:14px;letter-spacing:-0.100px;">Paintbrush -</div>
<div class="t" style="left:39.45px;width:300px;text-align:center;top:999px;font-weight:normal;color:#000;font-size:14px;letter-spacing:-0.100px;">(Untitled)</div>
<div class="" style="left:239px;top:982px;width:76px;height:32px;background:#cbcbcb"></div>
<div class="t" style="left:126.95px;width:300px;text-align:center;top:983px;font-weight:normal;color:#000;font-size:14px;letter-spacing:-0.100px;">Sid Meier's</div>
<div class="t" style="left:126.95px;width:300px;text-align:center;top:999px;font-weight:normal;color:#000;font-size:14px;letter-spacing:-0.100px;">Civilization II</div></body></html>
